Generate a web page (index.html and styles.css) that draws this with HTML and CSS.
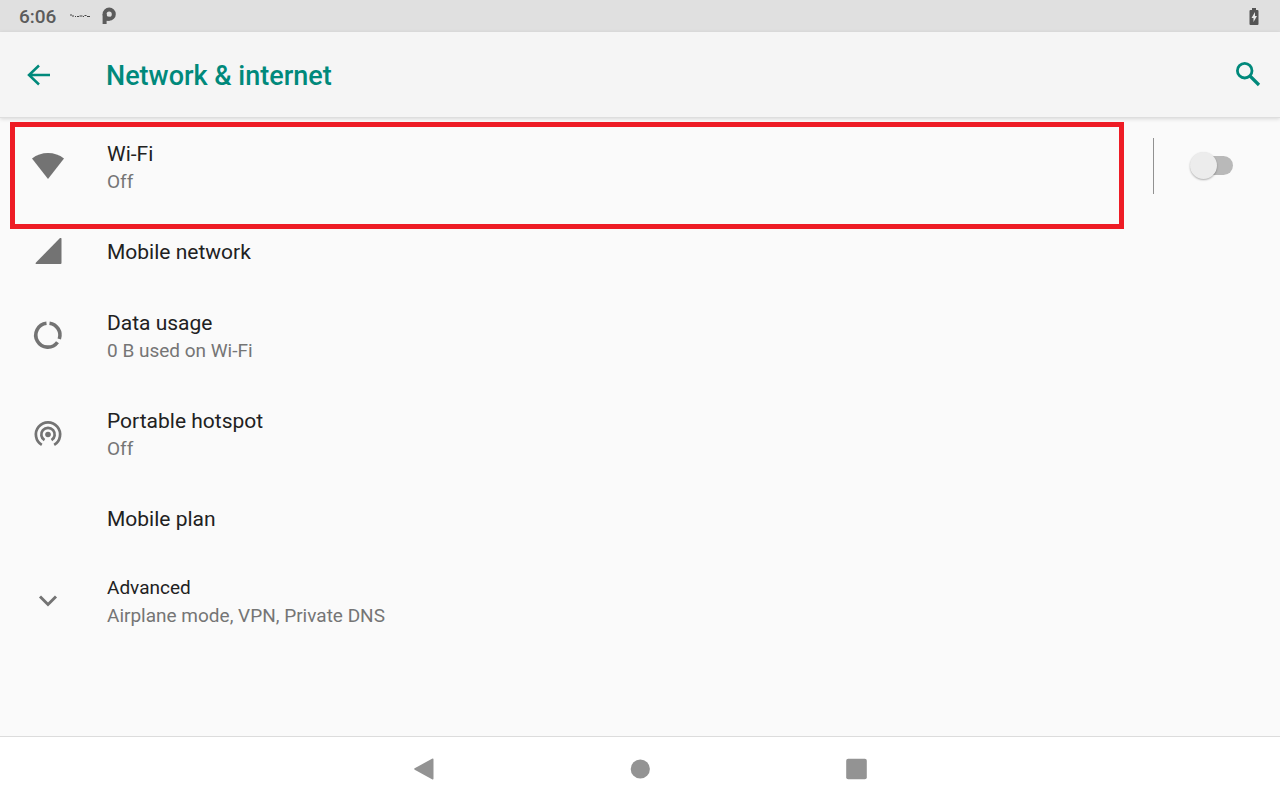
FILE: index.html
```html
<!DOCTYPE html>
<html lang="en">
<head>
<meta charset="utf-8">
<meta name="viewport" content="width=device-width, initial-scale=1">
<title>Network &amp; internet</title>
<link rel="stylesheet" href="styles.css">
</head>
<body>
<div class="status">
  <time class="clock">6:06</time>
  <svg class="notice" width="20" height="4" viewBox="0 0 20 4" aria-hidden="true"><path d="M0 1h2M2 2h2M5 2.500h1M7 2.500h2M9.500 2h3M13 2.500h1M14.500 1.500h2M17 2.500h3" stroke="#444" stroke-width="1.200"/></svg>
  <svg class="pie" width="14" height="18" viewBox="0 0 14 18" aria-hidden="true"><circle cx="7.200" cy="7.200" r="4.600" fill="none" stroke="#5c5c5c" stroke-width="4"/><path d="M2.600 7v10" stroke="#5c5c5c" stroke-width="4"/><path d="M4 11.800h3.500" stroke="#5c5c5c" stroke-width="4"/></svg>
  <svg class="battery" width="10" height="17" viewBox="0 0 10 17" aria-hidden="true"><path fill="#555" d="M3 0h4v2h1.500q1 0 1 1v13q0 1-1 1h-7q-1 0-1-1V3q0-1 1-1H3z"/><path fill="#e8e8e8" d="M6 4v4h2l-3.500 6V10H2.500z"/></svg>
</div>
<header class="bar">
  <button class="icon-btn" aria-label="Back"><svg width="24" height="22" viewBox="0 0 24 22"><path d="M12 1.500 2 11l10 9.500M2 11h21" fill="none" stroke="currentColor" stroke-width="2.500"/></svg></button>
  <h1 class="heading">Network &amp; internet</h1>
  <button class="icon-btn" aria-label="Search"><svg width="26" height="28" viewBox="0 0 26 28"><circle cx="9.700" cy="9.700" r="7.300" fill="none" stroke="currentColor" stroke-width="2.800"/><path d="m15 15 9 9" stroke="currentColor" stroke-width="3.200"/></svg></button>
</header>
<main class="list">
  <div class="row">
    <a class="item" href="#wifi">
      <svg class="icon" width="32" height="26" viewBox="0 0 32 26"><path fill="#737373" d="M0 5.500Q7 0 16 0t16 5.500L16 26z"/></svg>
      <span class="text"><span class="title" id="wifi-title">Wi-Fi</span><span class="sub">Off</span></span>
    </a>
    <span class="switch-box"><input class="switch" type="checkbox" role="switch" aria-labelledby="wifi-title"></span>
  </div>
  <a class="row single" href="#mobile">
    <svg class="icon" width="32" height="26" viewBox="0 0 32 26"><path fill="#737373" d="M28 0q1.500-.5 1.500 1v24q0 1-1 1h-24q-1.500 0-.5-1.500z"/></svg>
    <span class="title">Mobile network</span>
  </a>
  <a class="row" href="#data">
    <svg class="icon" width="32" height="32" viewBox="0 0 32 32"><g fill="none" stroke="#737373" stroke-width="3.600"><path d="M17.500 4.200A12 12 0 0 1 27.300 20"/><path d="M14.500 4.200A12 12 0 1 0 25.500 23.200"/></g></svg>
    <span class="text"><span class="title">Data usage</span><span class="sub">0 B used on Wi-Fi</span></span>
  </a>
  <a class="row" href="#hotspot">
    <svg class="icon" width="32" height="32" viewBox="0 0 32 32"><circle cx="16" cy="17.500" r="2.800" fill="#737373"/><g fill="none" stroke="#737373" stroke-width="2.700"><path d="M12.500 23.200A6.700 6.700 0 1 1 19.500 23.200"/><path d="M9.800 27.900A12.100 12.100 0 1 1 22.200 27.900"/></g></svg>
    <span class="text"><span class="title">Portable hotspot</span><span class="sub">Off</span></span>
  </a>
  <a class="row single" href="#plan">
    <span class="icon"></span>
    <span class="title">Mobile plan</span>
  </a>
  <button class="row advanced">
    <svg class="icon" width="32" height="12" viewBox="0 0 32 12"><path d="m8 1.500 8 8 8-8" fill="none" stroke="#737373" stroke-width="2.900"/></svg>
    <span class="text"><span class="title small">Advanced</span><span class="sub">Airplane mode, VPN, Private DNS</span></span>
  </button>
  <div class="highlight"></div>
</main>
<nav class="nav">
  <button class="nav-btn" aria-label="Back"><svg width="22" height="22" viewBox="0 0 22 22"><path fill="#939393" d="M19 .7q1.500-.8 1.500.8v19q0 1.500-1.500.8L1.700 11.700q-1.100-.7 0-1.400z"/></svg></button>
  <button class="nav-btn" aria-label="Home"><svg width="22" height="22" viewBox="0 0 22 22"><circle cx="11.300" cy="11" r="9.600" fill="#939393"/></svg></button>
  <button class="nav-btn" aria-label="Recent apps"><svg width="22" height="22" viewBox="0 0 22 22"><rect x="1.200" y=".7" width="20.600" height="20.600" rx="2" fill="#939393"/></svg></button>
</nav>
</body>
</html>
```
FILE: styles.css
```css
* {
  box-sizing: border-box;
}

body {
  margin: 0;
  min-height: 100vh;
  display: flex;
  flex-direction: column;
  background: #fafafa;
  color: #212121;
  font-family: Roboto, sans-serif;
}

button {
  border: 0;
  padding: 0;
  background: none;
  color: inherit;
  font: inherit;
  text-align: left;
  cursor: pointer;
}

a {
  color: inherit;
  text-decoration: none;
}

svg {
  display: block;
  flex-shrink: 0;
}

.status {
  display: flex;
  align-items: center;
  height: 32px;
  padding: 0 21px 0 19px;
  background: #e0e0e0;
}

.clock {
  color: #5c5c5c;
  font-size: 19px;
  font-weight: 500;
}

.notice {
  margin-left: 14px;
}

.pie {
  margin-left: 12px;
}

.battery {
  margin-left: auto;
}

.bar {
  display: flex;
  align-items: center;
  height: 86px;
  padding: 0 19px 0 27px;
  background: #f5f5f5;
  border-bottom: 1px solid #dedede;
  box-shadow: 0 1px 4px rgba(0, 0, 0, 0.14);
  color: #00897b;
}

.heading {
  flex: 1;
  margin: 2px 0 0 55px;
  font-size: 27px;
  font-weight: 500;
  line-height: 32px;
}

.list {
  position: relative;
  flex: 1;
  display: flex;
  flex-direction: column;
}

.row {
  display: flex;
  align-items: center;
  min-height: 98px;
  padding-left: 32px;
}

.single {
  min-height: 71px;
}

.advanced {
  min-height: 95px;
}

.item {
  flex: 1;
  display: flex;
  align-items: center;
}

.icon {
  width: 32px;
  margin: 0 43px 2px 0;
}

.text {
  display: flex;
  flex-direction: column;
}

.title {
  font-size: 21px;
  line-height: 28px;
}

.small {
  font-size: 19px;
}

.sub {
  color: #757575;
  font-size: 19px;
  line-height: 27px;
}

.switch-box {
  display: flex;
  align-items: center;
  height: 56px;
  margin-bottom: 2px;
  padding: 0 47px 0 36px;
  border-left: 1px solid #919191;
}

.switch {
  appearance: none;
  position: relative;
  width: 43px;
  height: 28px;
  margin: 0;
}

.switch::before {
  content: "";
  position: absolute;
  inset: 4px 0 5px 5px;
  border-radius: 10px;
  background: #b9b9b9;
}

.switch::after {
  content: "";
  position: absolute;
  top: 0;
  left: 0;
  width: 27px;
  height: 27px;
  border-radius: 50%;
  background: #ececec;
  box-shadow: 0 1px 2px rgba(0, 0, 0, 0.3);
}

.switch:checked::after {
  left: 16px;
  background: #00897b;
}

.highlight {
  position: absolute;
  top: 4px;
  left: 10px;
  right: 156px;
  height: 107px;
  border: 5px solid #ee1c25;
  pointer-events: none;
}

.nav {
  display: flex;
  justify-content: center;
  gap: 194px;
  height: 64px;
  background: #fff;
  border-top: 1px solid #dcdcdc;
}

.nav-btn {
  display: flex;
  align-items: center;
}
```
